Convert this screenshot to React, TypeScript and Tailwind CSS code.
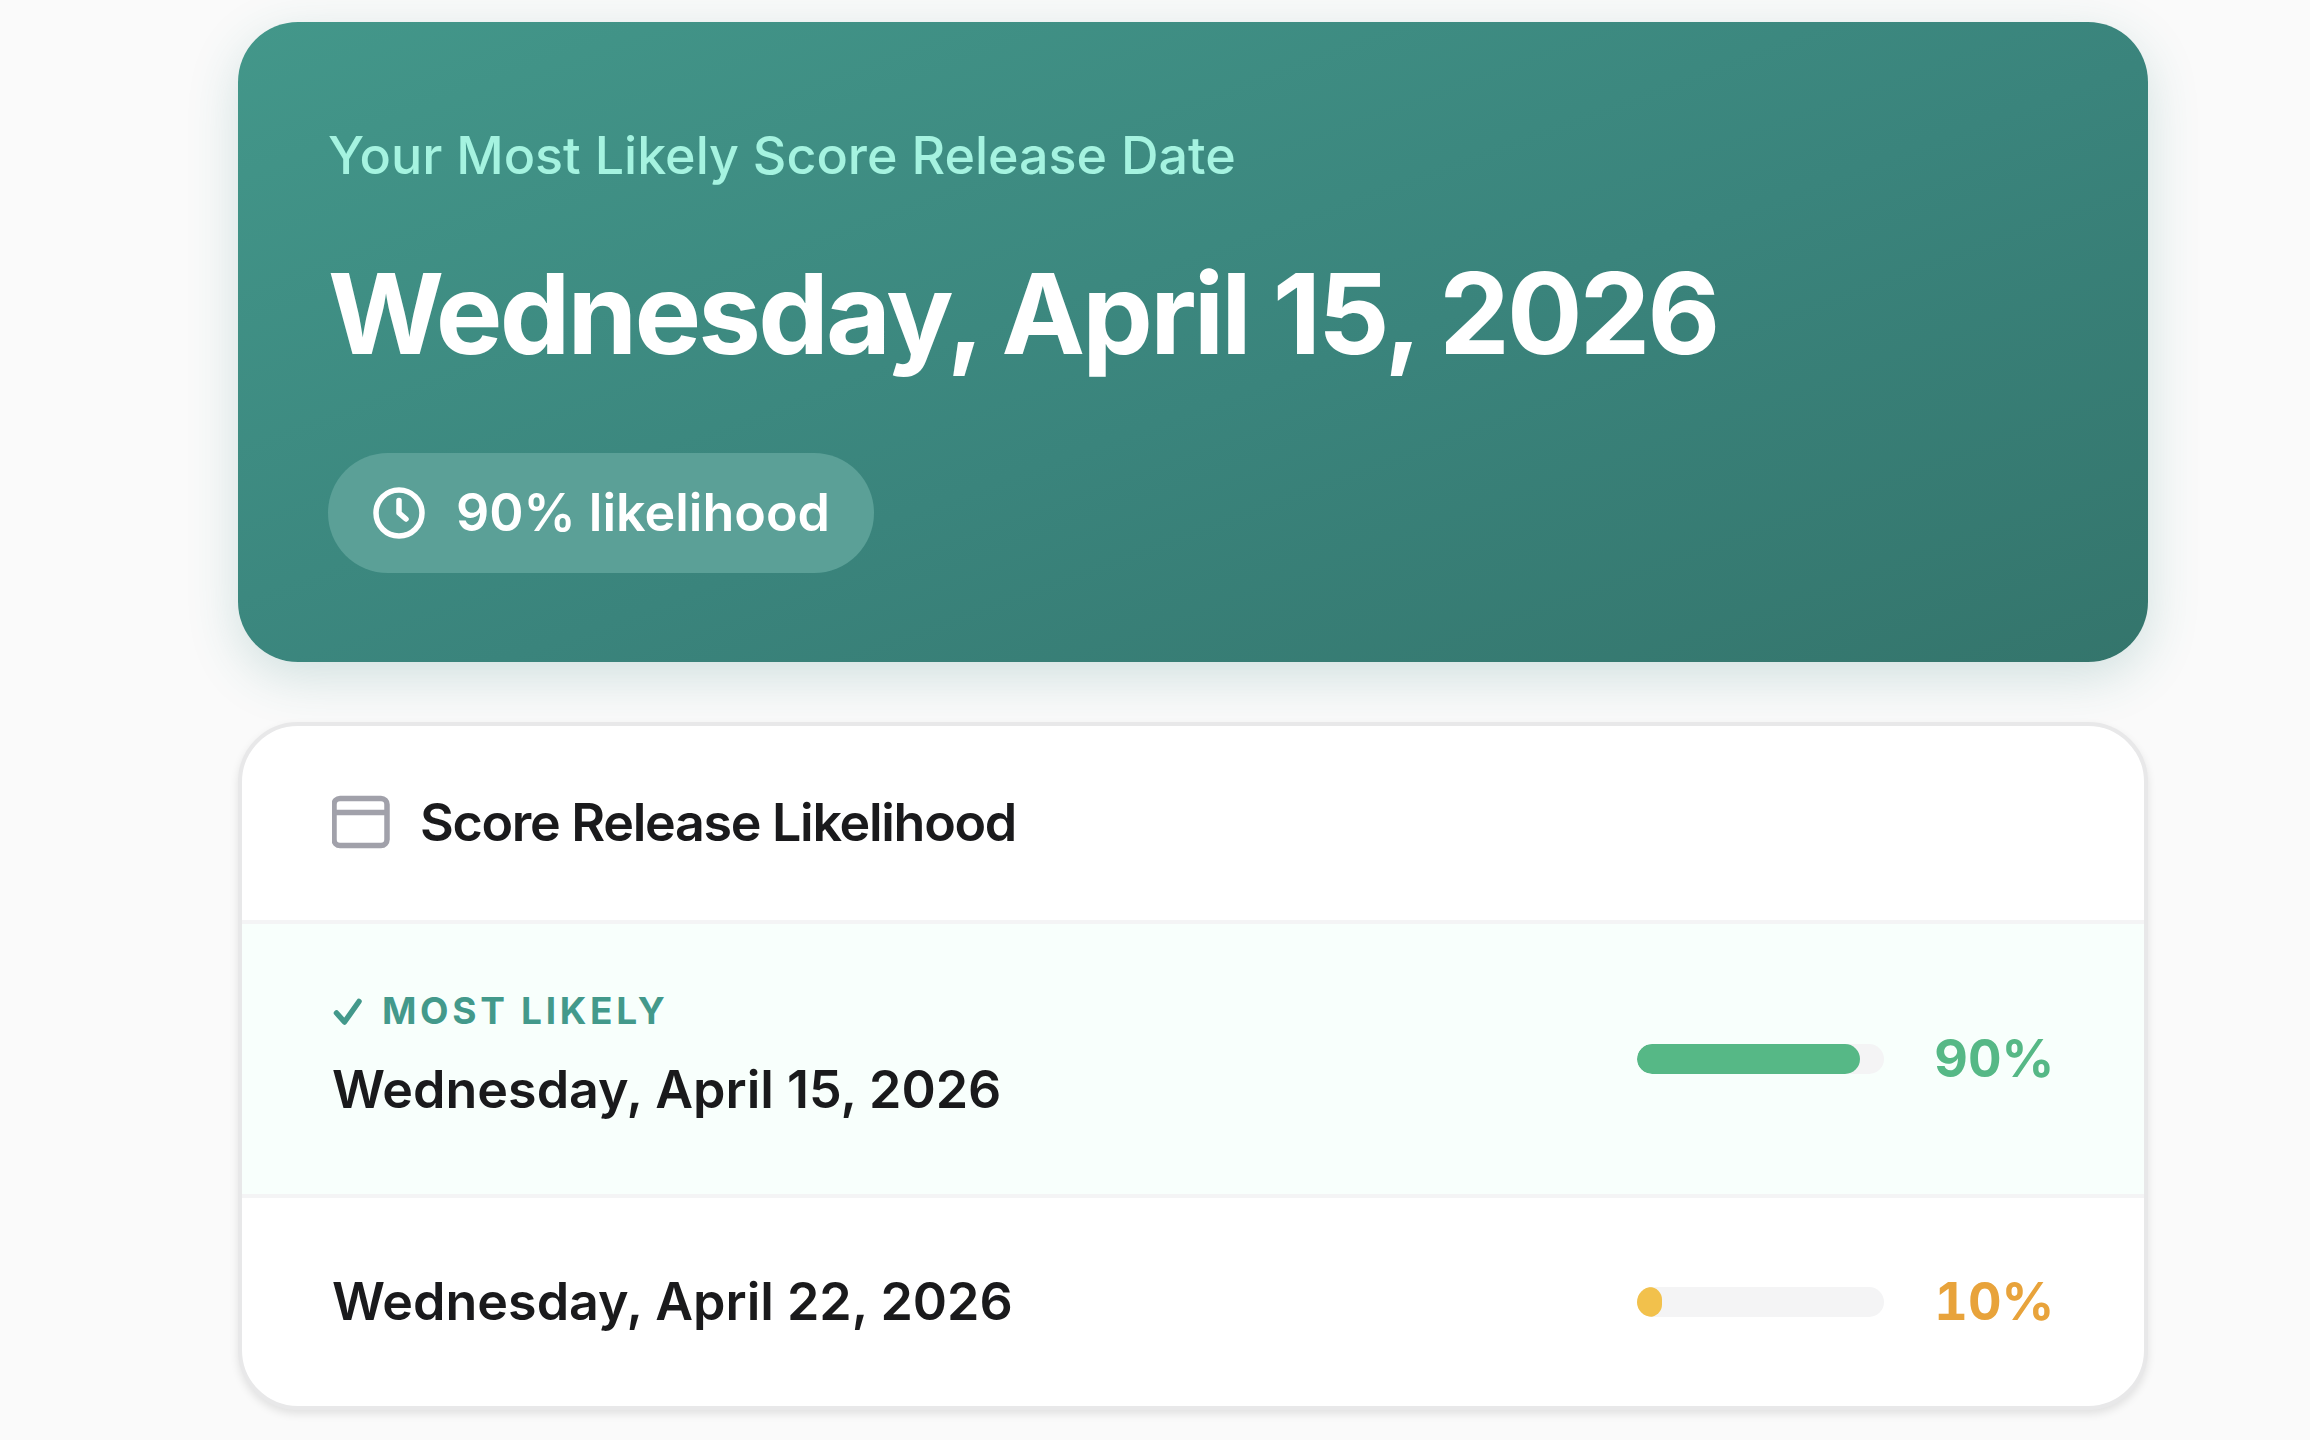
const dates = [
  { date: 'Wednesday, April 15, 2026', percent: 90, likely: true },
  { date: 'Wednesday, April 22, 2026', percent: 10, likely: false }
];

function ClockIcon() {
  return (
    <svg viewBox="0 0 56 56" className="size-14 shrink-0" fill="none" stroke="currentColor" strokeWidth="5.5" strokeLinecap="round" strokeLinejoin="round" aria-hidden="true">
      <circle cx="27" cy="28" r="23" />
      <path d="M27 15.5V28l7 6" />
    </svg>
  );
}

function CalendarIcon() {
  return (
    <svg viewBox="0 0 60 60" className="size-15 shrink-0 text-[#a1a1aa]" fill="none" stroke="currentColor" strokeWidth="5.5" aria-hidden="true">
      <rect x="2" y="5.5" width="53" height="47" rx="6" />
      <path d="M2 19.5h53" />
    </svg>
  );
}

function CheckIcon() {
  return (
    <svg viewBox="0 0 30 30" className="size-[30px] shrink-0" fill="none" stroke="currentColor" strokeWidth="5.5" strokeLinecap="round" strokeLinejoin="round" aria-hidden="true">
      <path d="M4.5 17l8 9L27 5.5" />
    </svg>
  );
}

function LikelihoodRow({ date, percent, likely }: { date: string; percent: number; likely: boolean }) {
  return (
    <li className={`flex items-center justify-between px-[90px] py-[65px] ${likely ? 'bg-[#f8fffc]' : 'border-t-4 border-[#f4f4f5]'}`}>
      <div>
        {likely && (
          <p className="mb-[18px] flex items-center gap-5 text-[37px] leading-[44px] font-bold tracking-widest text-[#43998b] uppercase">
            <CheckIcon />
            Most likely
          </p>
        )}
        <p className="text-[52px] leading-[78px] font-semibold text-[#1a1a1c]">{date}</p>
      </div>
      <div className="flex items-center gap-12">
        <div className="h-[30px] w-[247px] overflow-hidden rounded-full bg-[#f4f4f5]">
          <div className={`h-full rounded-full ${likely ? 'bg-[#56b886]' : 'bg-[#f2c14c]'}`} style={{ width: `${percent}%` }} />
        </div>
        <span className={`w-[122px] text-right text-[52px] leading-[78px] font-bold tabular-nums ${likely ? 'text-[#56b886]' : 'text-[#e8a33b]'}`}>{percent}%</span>
      </div>
    </li>
  );
}

export default function App() {
  return (
    <main className="min-h-screen bg-[#fafafa] pt-[22px] pr-[7%] pb-[26px] pl-[10.3%] font-[Inter,sans-serif]">
      <section className="rounded-[60px] bg-linear-160 from-[#43978a] via-[#3a847c] via-55% to-[#34756c] px-[90px] pt-[95px] pb-[89px] shadow-[0_15px_52px_rgba(45,125,120,0.2)]">
        <p className="text-[52px] leading-[78px] font-medium text-[#a5f3e0]">Your Most Likely Score Release Date</p>
        <h1 className="mt-12 text-[112px] leading-[140px] font-bold tracking-tight text-white">Wednesday, April 15, 2026</h1>
        <div className="mt-[70px] flex w-fit items-center gap-7 rounded-full bg-[#5ba097] px-11 py-[21px] text-[52px] leading-[78px] font-semibold text-white">
          <ClockIcon />
          90% likelihood
        </div>
      </section>

      <section className="mt-[60px] overflow-hidden rounded-[60px] border-4 border-[#e8e8e9] bg-white shadow-[0_4px_8px_rgba(0,0,0,0.1)]">
        <div className="flex items-center gap-7 border-b-4 border-[#f4f4f5] px-[90px] py-[58px]">
          <CalendarIcon />
          <h2 className="text-[52px] leading-[78px] font-semibold tracking-tight text-[#1a1a1c]">Score Release Likelihood</h2>
        </div>
        <ul>
          {dates.map((item) => (
            <LikelihoodRow key={item.date} {...item} />
          ))}
        </ul>
      </section>
    </main>
  );
}
